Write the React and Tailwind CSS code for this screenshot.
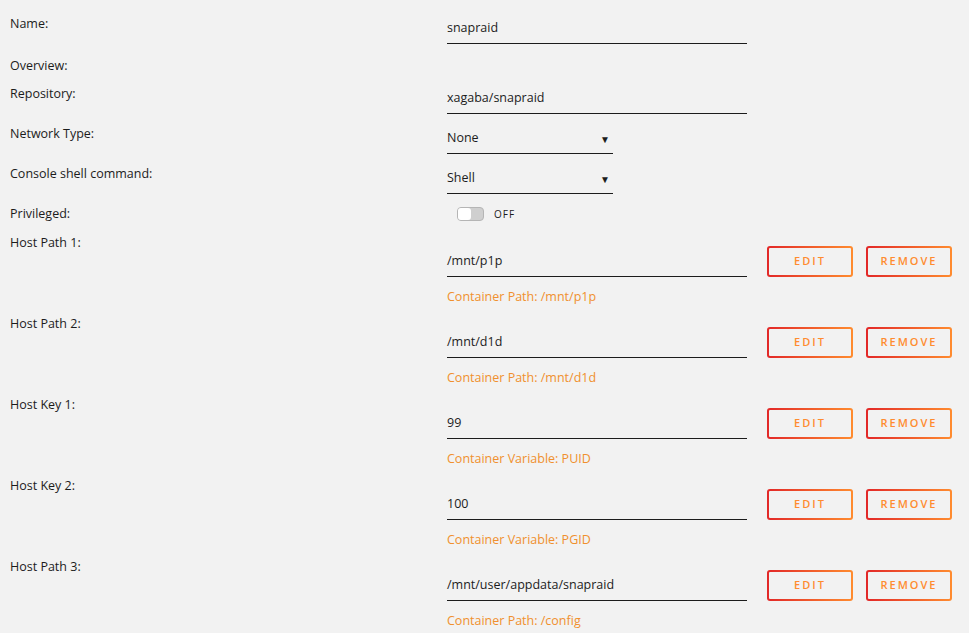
const hostRows = [
  { label: "Host Path 1:", value: "/mnt/p1p", note: "Container Path: /mnt/p1p" },
  { label: "Host Path 2:", value: "/mnt/d1d", note: "Container Path: /mnt/d1d" },
  { label: "Host Key 1:", value: "99", note: "Container Variable: PUID" },
  { label: "Host Key 2:", value: "100", note: "Container Variable: PGID" },
  { label: "Host Path 3:", value: "/mnt/user/appdata/snapraid", note: "Container Path: /config" },
];

function Label({ children }) {
  return <div className="w-[437px] shrink-0 leading-5 pt-[2px]">{children}</div>;
}

function TextField({ value, width = "w-[300px]" }) {
  return (
    <div className={`${width} h-8 flex items-center border-b border-[#1c1c1c]`}>
      <span className="pt-[2px]">{value}</span>
    </div>
  );
}

function SelectField({ value }) {
  return (
    <div className="w-[166px] h-8 flex items-center justify-between border-b border-[#1c1c1c] pr-[3px]">
      <span className="pt-[2px]">{value}</span>
      <span className="text-[10px] leading-none pt-[2px] text-[#1c1c1c]">▼</span>
    </div>
  );
}

function GradientButton({ children }) {
  return (
    <button className="w-[86px] h-[31px] rounded-[3px] border-2 border-transparent [background:linear-gradient(#f2f2f2,#f2f2f2)_padding-box,linear-gradient(90deg,#e22828,#ff8c2f)_border-box] text-[11px] font-semibold tracking-[2px] text-[#ff8c2f] flex items-center justify-center">
      {children}
    </button>
  );
}

export default function App() {
  return (
    <div className="min-h-screen bg-[#f2f2f2] text-[#1c1c1c] text-[12.5px] font-['Open_Sans',sans-serif] pl-[10px] pt-3">
      {/* Name */}
      <div className="flex">
        <Label>Name:</Label>
        <TextField value="snapraid" />
      </div>

      {/* Overview */}
      <div className="flex mt-[10px]">
        <Label>Overview:</Label>
      </div>

      {/* Repository */}
      <div className="flex mt-[6px]">
        <Label>Repository:</Label>
        <TextField value="xagaba/snapraid" />
      </div>

      <div className="flex mt-2">
        <Label>Network Type:</Label>
        <SelectField value="None" />
      </div>

      <div className="flex mt-2">
        <Label>Console shell command:</Label>
        <SelectField value="Shell" />
      </div>

      {/* Privileged */}
      <div className="flex mt-[8px] items-center">
        <Label>Privileged:</Label>
        <div className="flex items-center pl-[10px] pt-[2px]">
          <div className="w-[27px] h-[14px] rounded-[4px] bg-[#cfcfcf] border border-[#b5b5b5] flex items-center">
            <div className="w-[13px] h-[12px] rounded-[3px] bg-white" />
          </div>
          <span className="ml-[10px] text-[10px] tracking-[1px]">OFF</span>
        </div>
      </div>

      <div className="mt-[7px]">
        {hostRows.map((r) => (
          <div key={r.label} className="flex mb-[5px]">
            <Label>{r.label}</Label>
            <div className="pt-[14px]">
              <div className="flex items-end">
                <TextField value={r.value} />
                <div className="flex gap-[13px] ml-5">
                  <GradientButton>EDIT</GradientButton>
                  <GradientButton>REMOVE</GradientButton>
                </div>
              </div>
              <div className="mt-[10px] leading-5 text-[#f0902e]">{r.note}</div>
            </div>
          </div>
        ))}
      </div>
    </div>
  );
}
